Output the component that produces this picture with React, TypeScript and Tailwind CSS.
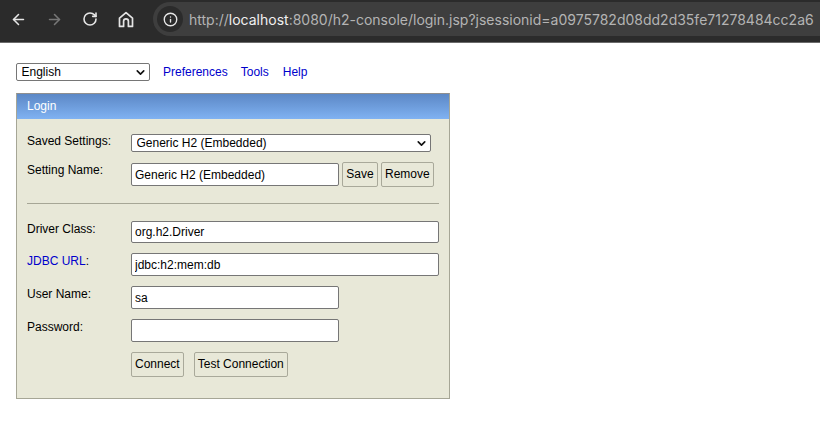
import { ArrowLeft, ArrowRight, ChevronDown, Info, RotateCw } from "lucide-react";

const fontStack = "font-['Liberation_Sans',Arial,sans-serif]";

const HomeIcon = () => (
  <svg width="16" height="17" viewBox="0 0 16 17" fill="none" stroke="#e4e4e4" strokeWidth="1.7" strokeLinejoin="round">
    <path d="M1.5 7.2 8 1.6l6.5 5.6v8.2h-4.1v-5.2a2.4 2.4 0 0 0-4.8 0v5.2H1.5z" />
  </svg>
);

const Toolbar = () => (
  <div className="flex h-[43px] items-start border-b border-[#6b6b6b] bg-[#2b2b2b] pt-[2px]">
    <div className="flex h-[34px] w-[153px] shrink-0 items-center">
      <ArrowLeft size={17} strokeWidth={2.2} color="#e6e6e6" className="ml-[10px]" />
      <ArrowRight size={17} strokeWidth={2.2} color="#777777" className="ml-[19px]" />
      <RotateCw size={16} strokeWidth={2.4} color="#e6e6e6" className="ml-[19px]" />
      <div className="ml-[20px]">
        <HomeIcon />
      </div>
    </div>
    <div className="flex h-[34px] min-w-0 flex-1 items-center overflow-hidden rounded-l-[17px] bg-[#3e3e3e]">
      <div className="ml-[4px] flex h-[26px] w-[26px] shrink-0 items-center justify-center rounded-full bg-[#2b2b2b]">
        <Info size={15} strokeWidth={2.2} color="#e6e6e6" />
      </div>
      <div className="ml-[6px] whitespace-nowrap font-['Inter',sans-serif] text-[14px] text-[#b4b4b4]">
        http://<span className="text-[#f0f0f0]">localhost</span>:8080/h2-console/login.jsp?jsessionid=a0975782d08dd2d35fe71278484cc2a6
      </div>
    </div>
  </div>
);

const Field = ({ value, size }: { value?: string; size: string }) => (
  <input
    readOnly
    defaultValue={value}
    className={`rounded-[2px] border border-[#767676] bg-white px-[3px] text-[12px] text-black outline-none ${size}`}
  />
);

const Btn = ({ label, width }: { label: string; width?: string }) => (
  <button className={`h-[25px] rounded-[2px] border border-[#a9a99a] bg-[#e8e8d8] px-[3px] pb-[2px] text-[12px] text-black ${width ?? ""}`}>
    {label}
  </button>
);

const Label = ({ children }: { children: React.ReactNode }) => (
  <div className="w-[104px] shrink-0 pt-[1px] text-[12px] leading-[14px] text-black">{children}</div>
);

const Select = ({ value, width }: { value: string; width: string }) => (
  <div className={`relative h-[18px] ${width}`}>
    <select className="block h-full w-full appearance-none rounded-[2px] border border-[#767676] bg-white pl-[4.5px] text-[12px] leading-[14px] text-black outline-none">
      <option>{value}</option>
    </select>
    <ChevronDown size={13} strokeWidth={3} color="#111111" className="pointer-events-none absolute right-[3px] top-[3px]" />
  </div>
);

export default function App() {
  return (
    <div className={`h-[430px] w-[820px] overflow-hidden bg-white ${fontStack}`}>
      <Toolbar />
      <div className="px-[16px] pt-[20px]">
        <div className="flex items-center">
          <Select value="English" width="w-[134px]" />
          <a className="ml-[13px] text-[12px] text-[#0000cc]">Preferences</a>
          <a className="ml-[13px] text-[12px] text-[#0000cc]">Tools</a>
          <a className="ml-[14px] text-[12px] text-[#0000cc]">Help</a>
        </div>

        <div className="mt-[12px] h-[306px] w-[434px] border border-[#a6a696] border-t-[#8f8f8f] bg-[#e8e8d8]">
          <div className="h-[25px] bg-gradient-to-b from-[#5c88c6] to-[#80b2f2] pl-[10px] text-[12px] leading-[24px] text-white">
            Login
          </div>
          <div className="px-[10px] pt-[15px]">
            <div className="flex items-start">
              <Label>
                <div className="-mt-[1px]">Saved Settings:</div>
              </Label>
              <Select value="Generic H2 (Embedded)" width="w-[300px]" />
            </div>
            <div className="mt-[10px] flex items-start">
              <Label>Setting Name:</Label>
              <div className="flex items-center">
                <Field value="Generic H2 (Embedded)" size="h-[23px] w-[208px]" />
                <div className="ml-[3px] flex gap-[3px]">
                  <Btn label="Save" width="w-[36px]" />
                  <Btn label="Remove" />
                </div>
              </div>
            </div>
            <div className="mt-[16px] h-px w-[412px] bg-[#a6a696]" />
            <div className="mt-[17px] flex items-start">
              <Label>Driver Class:</Label>
              <Field value="org.h2.Driver" size="h-[22px] w-[308px]" />
            </div>
            <div className="mt-[10px] flex items-start">
              <Label>
                <a className="text-[#0000cc]">JDBC URL</a>:
              </Label>
              <Field value="jdbc:h2:mem:db" size="h-[23px] w-[308px]" />
            </div>
            <div className="mt-[10px] flex items-start">
              <Label>User Name:</Label>
              <Field value="sa" size="h-[23px] w-[208px]" />
            </div>
            <div className="mt-[10px] flex items-start">
              <Label>Password:</Label>
              <Field size="h-[23px] w-[208px]" />
            </div>
            <div className="ml-[104px] mt-[10px] flex gap-[10px]">
              <Btn label="Connect" />
              <Btn label="Test Connection" />
            </div>
          </div>
        </div>
      </div>
    </div>
  );
}
